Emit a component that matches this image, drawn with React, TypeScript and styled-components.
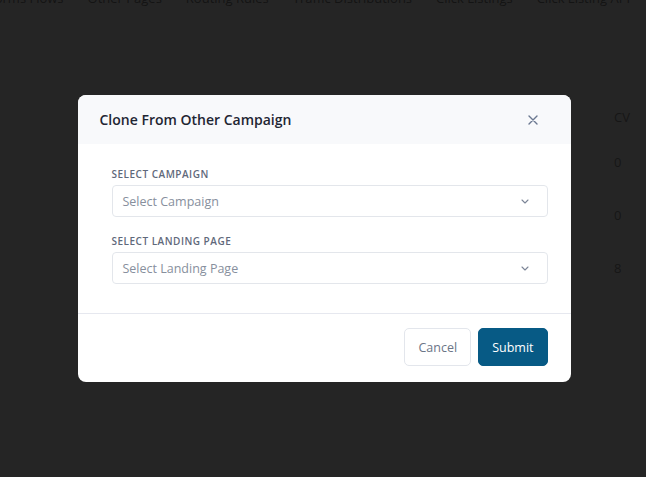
import React from "react";
import styled, { createGlobalStyle } from "styled-components";

const GlobalStyle = createGlobalStyle`
  html, body {
    margin: 0;
    padding: 0;
    background: #ffffff;
    font-family: "Open Sans", "Noto Sans", sans-serif;
    overflow: hidden;
  }
  * { box-sizing: border-box; }
`;

const tabs = ["Forms Flows", "Other Pages", "Routing Rules", "Traffic Distributions", "Click Listings", "Click Listing API"];
const cvValues = ["0", "0", "8"];

const App: React.FC = () => {
  return (
    <>
      <GlobalStyle />
      <Page>
        <TabBar>
          {tabs.map((t) => (
            <Tab key={t}>{t}</Tab>
          ))}
        </TabBar>
        <Table>
          <HeadRow>
            <Cell>CV</Cell>
          </HeadRow>
          {cvValues.map((v, i) => (
            <BodyRow key={i}>
              <Cell>{v}</Cell>
            </BodyRow>
          ))}
        </Table>
      </Page>

      <Overlay>
        <Modal>
          <Header>
            <Title>Clone From Other Campaign</Title>
            <CloseButton aria-label="close">
              <svg width="10" height="10" viewBox="0 0 10 10" fill="none">
                <path d="M1 1L9 9M9 1L1 9" stroke="#6b7890" strokeWidth="1.4" strokeLinecap="round" />
              </svg>
            </CloseButton>
          </Header>

          <Body>
            <Field>
              <Label>Select Campaign</Label>
              <SelectBox>
                <Placeholder>Select Campaign</Placeholder>
                <Chevron />
              </SelectBox>
            </Field>
            <Field>
              <Label>Select Landing Page</Label>
              <SelectBox>
                <Placeholder>Select Landing Page</Placeholder>
                <Chevron />
              </SelectBox>
            </Field>
          </Body>

          <Footer>
            <Button $variant="secondary">Cancel</Button>
            <Button $variant="primary">Submit</Button>
          </Footer>
        </Modal>
      </Overlay>
    </>
  );
};

const Chevron: React.FC = () => (
  <ChevronWrap>
    <svg width="8" height="5" viewBox="0 0 8 5" fill="none">
      <path d="M1 1L4 4L7 1" stroke="#7c8597" strokeWidth="1.1" strokeLinecap="round" strokeLinejoin="round" />
    </svg>
  </ChevronWrap>
);

export default App;

// ---------------------------- background page ---------------------------

const Page = styled.div`
  width: 646px;
  height: 477px;
  background: #ffffff;
  color: #8a8a8a;
`;

const TabBar = styled.nav`
  display: flex;
  gap: 24px;
  margin-top: -12px;
  margin-left: -12px;
  white-space: nowrap;
`;

const Tab = styled.span`
  font-size: 13px;
  line-height: 20px;
  color: #8a8a8a;
`;

const Table = styled.div`
  display: flex;
  flex-direction: column;
  align-items: flex-end;
  margin-top: 97px;
`;

const HeadRow = styled.div`
  height: 45px;
  width: 32px;
`;

const BodyRow = styled.div`
  height: 53px;
  width: 32px;
`;

const Cell = styled.span`
  font-size: 13px;
  line-height: 20px;
  color: #9a9a9a;
`;

// ---------------------------- modal ---------------------------

const Overlay = styled.div`
  position: fixed;
  inset: 0;
  background: rgba(0, 0, 0, 0.855);
  display: flex;
  align-items: center;
  justify-content: center;
`;

const Modal = styled.div`
  width: 493px;
  margin-left: 2px;
  background: #ffffff;
  border-radius: 8px;
  overflow: hidden;
`;

const Header = styled.div`
  height: 49px;
  background: #f8f9fb;
  display: flex;
  align-items: center;
  justify-content: space-between;
  padding: 0 33px 0 22px;
`;

const Title = styled.h3`
  margin: 0;
  font-size: 14px;
  font-weight: 600;
  color: #1f2633;
`;

const CloseButton = styled.button`
  border: none;
  background: none;
  padding: 0;
  display: flex;
  cursor: pointer;
`;

const Body = styled.div`
  padding: 23px 23px 12px 34px;
`;

const Field = styled.div`
  margin-bottom: 17px;
`;

const Label = styled.div`
  font-size: 10px;
  line-height: 14px;
  font-weight: 600;
  letter-spacing: 0.5px;
  text-transform: uppercase;
  color: #5f697b;
  margin-bottom: 4px;
`;

const SelectBox = styled.div`
  height: 32px;
  border: 1px solid #e3e6eb;
  border-radius: 4px;
  display: flex;
  align-items: center;
  justify-content: space-between;
  padding: 0 18px 0 10px;
`;

const Placeholder = styled.span`
  font-size: 12.5px;
  color: #878f9d;
`;

const ChevronWrap = styled.span`
  display: flex;
`;

const Footer = styled.div`
  border-top: 1px solid #e6e8ef;
  display: flex;
  justify-content: flex-end;
  gap: 7px;
  padding: 14px 23px 16px;
`;

const Button = styled.button<{ $variant: "primary" | "secondary" }>`
  height: 38px;
  padding: 0 13px;
  border-radius: 5px;
  font-family: "Open Sans", "Noto Sans", sans-serif;
  font-size: 12.5px;
  cursor: pointer;
  border: 1px solid ${({ $variant }) => ($variant === "primary" ? "#075a85" : "#e3e6ec")};
  background: ${({ $variant }) => ($variant === "primary" ? "#075a85" : "#ffffff")};
  color: ${({ $variant }) => ($variant === "primary" ? "#ffffff" : "#6b7587")};
`;
